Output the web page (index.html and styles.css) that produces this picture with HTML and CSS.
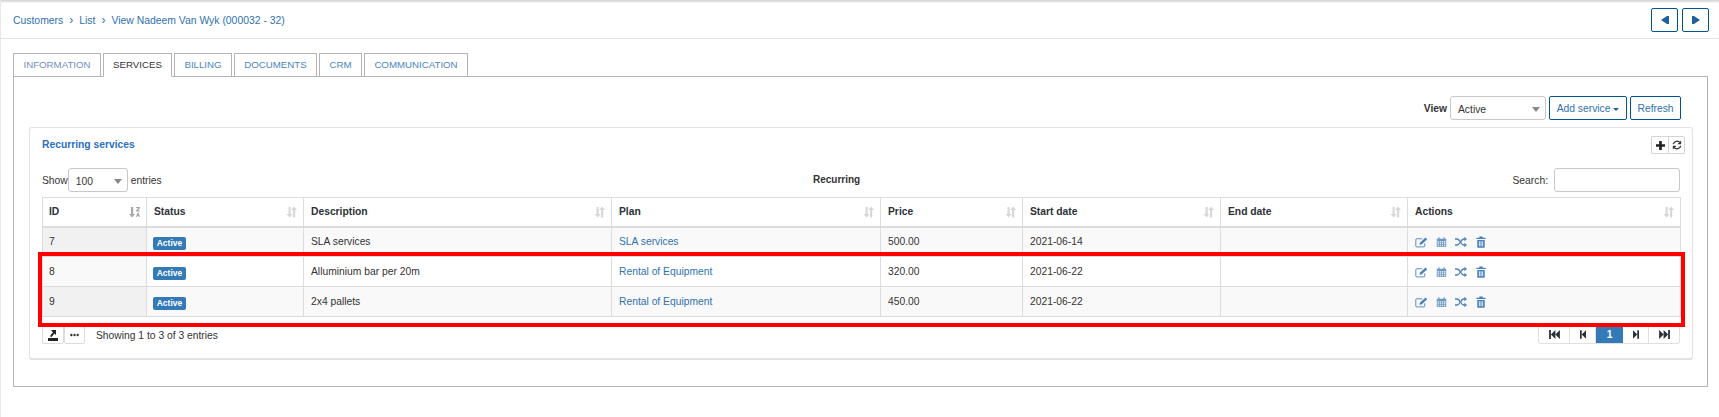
FILE: index.html
```html
<!DOCTYPE html>
<html lang="en">
<head>
<meta charset="utf-8">
<title>View Nadeem Van Wyk</title>
<link rel="stylesheet" href="styles.css">
</head>
<body>
<svg class="defs" aria-hidden="true">
  <symbol id="i-sort" viewBox="0 0 12 12"><path d="M2.500 1h2.200v7h2L3.600 11.500.5 8h2zM8 .5L11.200 4H9.200v7.500H7V4H5z"/></symbol>
  <symbol id="i-sortid" viewBox="0 0 12 12"><path d="M2 1h2.200v7h2l-3.100 3.500L0 8h2z"/><path d="M7 1h4v1l-2 2.500h2v1H7v-1l2-2.500H7zM7 11l1.500-4.500h1L11 11H9.900l-.3-1H8.400l-.3 1z"/></symbol>
  <symbol id="i-edit" viewBox="0 0 16 14"><path d="M12 8.500V12a1 1 0 0 1-1 1H2a1 1 0 0 1-1-1V4a1 1 0 0 1 1-1h7" fill="none" stroke="currentColor" stroke-width="1.100"/><path d="M6 8l7-6.500 2 2L8 10l-2.500.5z"/></symbol>
  <symbol id="i-cal" viewBox="0 0 14 14"><path d="M1 3h2V1h1.500v2h5V1H11v2h2v10.500H1zM2 6v1.500h2V6zm3 0v1.500h1.500V6zm2.500 0v1.500H9V6zM10 6v1.500h2V6zM2 8.500V10h2V8.500zm3 0V10h1.500V8.500zm2.500 0V10H9V8.500zm2.500 0V10h2V8.500zM2 11v1.500h2V11zm3 0v1.500h1.500V11zm2.500 0v1.500H9V11zm2.500 0v1.500h2V11z" fill-rule="evenodd"/></symbol>
  <symbol id="i-rand" viewBox="0 0 16 14"><path d="M0 3h3c3.500 0 5 8 8.500 8H13" fill="none" stroke="currentColor" stroke-width="1.800"/><path d="M0 11h3c3.500 0 5-8 8.500-8H13" fill="none" stroke="currentColor" stroke-width="1.800"/><path d="M12.500 0L16 3l-3.500 3zM12.500 8l3.500 3-3.500 3z"/></symbol>
  <symbol id="i-trash" viewBox="0 0 12 14"><path d="M4 2V.5h4V2h3.500v1.500H.5V2zM1.500 4.500h9V13a1 1 0 0 1-1 1h-7a1 1 0 0 1-1-1zM3.500 6v6h1V6zm2 0v6h1V6zm2 0v6h1V6z" fill-rule="evenodd"/></symbol>
  <symbol id="i-first" viewBox="0 0 12 10"><path d="M0 0h2v10H0zM7 0v10L2 5zM12 0v10L7 5z"/></symbol>
  <symbol id="i-prev" viewBox="0 0 7 10"><path d="M0 0h2v10H0zM7 0v10L2 5z"/></symbol>
  <symbol id="i-next" viewBox="0 0 7 10"><path d="M5 0h2v10H5zM0 0v10l5-5z"/></symbol>
  <symbol id="i-last" viewBox="0 0 12 10"><path d="M10 0h2v10h-2zM0 0v10l5-5zM5 0v10l5-5z"/></symbol>
  <symbol id="i-tprev" viewBox="0 0 8 8"><path d="M0 4l6-4v8zM6 0h2v8H6z"/></symbol>
  <symbol id="i-tnext" viewBox="0 0 8 8"><path d="M0 0h2v8H0zM2 0l6 4-6 4z"/></symbol>
  <symbol id="i-export" viewBox="0 0 10 11"><path d="M3 0h5v5L6.500 3.500 3.500 7H2.500V5L5 2.500zM0 8h10v3H0z"/></symbol>
  <symbol id="i-dots" viewBox="0 0 10 4"><circle cx="1.500" cy="2" r="1.300"/><circle cx="5" cy="2" r="1.300"/><circle cx="8.500" cy="2" r="1.300"/></symbol>
  <symbol id="i-plus" viewBox="0 0 10 10"><path d="M3.500 0h3v3.500H10v3H6.500V10h-3V6.500H0v-3h3.500z"/></symbol>
  <symbol id="i-refresh" viewBox="0 0 12 12"><path d="M1.500 5A4.600 4.600 0 0 1 9.600 3.200M10.500 7A4.600 4.600 0 0 1 2.400 8.800" fill="none" stroke="currentColor" stroke-width="1.600"/><path d="M11 .5V5H6.500zM1 11.500V7h4.500z"/></symbol>
</svg>

<header class="topbar">
  <nav class="crumbs">
    <a>Customers</a><span class="sep">›</span><a>List</a><span class="sep">›</span><a>View Nadeem Van Wyk (000032 - 32)</a>
  </nav>
  <div class="pager-top">
    <button class="btn-top"><svg class="ico-top"><use href="#i-tprev"/></svg></button>
    <button class="btn-top"><svg class="ico-top"><use href="#i-tnext"/></svg></button>
  </div>
</header>

<main class="content">
  <ul class="tabs">
    <li class="tab tab-info">INFORMATION</li>
    <li class="tab tab-services">SERVICES</li>
    <li class="tab tab-billing">BILLING</li>
    <li class="tab tab-docs">DOCUMENTS</li>
    <li class="tab tab-crm">CRM</li>
    <li class="tab tab-comm">COMMUNICATION</li>
  </ul>
  <section class="panel">
    <div class="toolbar">
      <b class="view-label">View</b>
      <div class="select select-view"><span>Active</span><i class="caret"></i></div>
      <button class="btn btn-add">Add service <i class="caret-sm"></i></button>
      <button class="btn btn-refresh">Refresh</button>
    </div>
    <div class="card">
      <div class="card-head">
        <h2 class="card-title">Recurring services</h2>
        <div class="tools">
          <button class="tool"><svg class="ico-plus"><use href="#i-plus"/></svg></button>
          <button class="tool"><svg class="ico-refresh"><use href="#i-refresh"/></svg></button>
        </div>
      </div>
      <div class="table-head">
        <div class="length">Show <div class="select select-len"><span>100</span><i class="caret"></i></div> entries</div>
        <div class="table-title">Recurring</div>
        <div class="search">Search: <input class="search-input" type="text"></div>
      </div>
      <div class="table-wrap">
        <table class="grid">
          <colgroup>
            <col class="c-id"><col class="c-status"><col class="c-desc"><col class="c-plan"><col class="c-price"><col class="c-start"><col class="c-end"><col class="c-act">
          </colgroup>
          <thead>
            <tr>
              <th class="th-id">ID<svg class="sort sort-on"><use href="#i-sortid"/></svg></th>
              <th>Status<svg class="sort"><use href="#i-sort"/></svg></th>
              <th>Description<svg class="sort"><use href="#i-sort"/></svg></th>
              <th>Plan<svg class="sort"><use href="#i-sort"/></svg></th>
              <th>Price<svg class="sort"><use href="#i-sort"/></svg></th>
              <th>Start date<svg class="sort"><use href="#i-sort"/></svg></th>
              <th>End date<svg class="sort"><use href="#i-sort"/></svg></th>
              <th>Actions<svg class="sort"><use href="#i-sort"/></svg></th>
            </tr>
          </thead>
          <tbody>
            <tr class="odd">
              <td class="id">7</td><td><span class="badge">Active</span></td><td>SLA services</td><td><a>SLA services</a></td><td>500.00</td><td>2021-06-14</td><td></td>
              <td class="actions"><svg class="a-edit"><use href="#i-edit"/></svg><svg class="a-cal"><use href="#i-cal"/></svg><svg class="a-rand"><use href="#i-rand"/></svg><svg class="a-trash"><use href="#i-trash"/></svg></td>
            </tr>
            <tr>
              <td class="id">8</td><td><span class="badge">Active</span></td><td>Alluminium bar per 20m</td><td><a>Rental of Equipment</a></td><td>320.00</td><td>2021-06-22</td><td></td>
              <td class="actions"><svg class="a-edit"><use href="#i-edit"/></svg><svg class="a-cal"><use href="#i-cal"/></svg><svg class="a-rand"><use href="#i-rand"/></svg><svg class="a-trash"><use href="#i-trash"/></svg></td>
            </tr>
            <tr class="odd">
              <td class="id">9</td><td><span class="badge">Active</span></td><td>2x4 pallets</td><td><a>Rental of Equipment</a></td><td>450.00</td><td>2021-06-22</td><td></td>
              <td class="actions"><svg class="a-edit"><use href="#i-edit"/></svg><svg class="a-cal"><use href="#i-cal"/></svg><svg class="a-rand"><use href="#i-rand"/></svg><svg class="a-trash"><use href="#i-trash"/></svg></td>
            </tr>
          </tbody>
        </table>
        <div class="highlight"></div>
      </div>
      <div class="table-foot">
        <div class="foot-left">
          <div class="foot-tools">
            <button class="ft"><svg class="ico-export"><use href="#i-export"/></svg></button>
            <button class="ft"><svg class="ico-dots"><use href="#i-dots"/></svg></button>
          </div>
          <span class="info">Showing 1 to 3 of 3 entries</span>
        </div>
        <div class="pages">
          <span class="pg pg-first"><svg class="ico-d"><use href="#i-first"/></svg></span>
          <span class="pg pg-prev"><svg class="ico-s"><use href="#i-prev"/></svg></span>
          <span class="pg pg-cur">1</span>
          <span class="pg pg-next"><svg class="ico-s"><use href="#i-next"/></svg></span>
          <span class="pg pg-last"><svg class="ico-d"><use href="#i-last"/></svg></span>
        </div>
      </div>
    </div>
  </section>
</main>
</body>
</html>
```
FILE: styles.css
```css
* { box-sizing: border-box; }
html, body { margin: 0; padding: 0; }
body {
  height: 417px;
  overflow: hidden;
  background: #fff;
  color: #333;
  font-family: "Liberation Sans", Arial, sans-serif;
  font-size: 10.3px;
  box-shadow: inset 1px 0 0 #e8e8e8, inset 0 3px 2px -1px #d8d8d8;
}
a { color: #2f72ad; text-decoration: none; }
.defs { display: none; }
button { font-family: inherit; padding: 0; background: #fff; cursor: pointer; }

.topbar {
  height: 39px;
  display: flex;
  justify-content: space-between;
  padding: 8px 10px 0 13px;
  border-bottom: 1px solid #e3e3e3;
}
.crumbs { height: 24px; line-height: 26px; color: #2f72ad; font-size: 10.4px; }
.sep { display: inline-block; width: 16px; text-align: center; font-size: 12px; line-height: 10px; }
.pager-top { display: flex; gap: 4px; }
.btn-top {
  width: 27px;
  height: 24px;
  border: 1px solid #00548f;
  border-radius: 2px;
  color: #1f5f9c;
  display: flex;
  align-items: center;
  justify-content: center;
}
.ico-top { width: 8px; height: 8px; fill: currentColor; }

.content { padding: 14px 11px 0 13px; }
.tabs { display: flex; gap: 2px; list-style: none; margin: 0; padding: 0; }
.tab {
  height: 24px;
  margin-bottom: -1px;
  border: 1px solid #b4b4b4;
  background: #fff;
  color: #4a86c0;
  font-size: 9.7px;
  line-height: 21px;
  text-align: center;
  position: relative;
}
.tab-info { width: 88px; color: #6f8fc0; }
.tab-services { width: 69px; color: #333; border-bottom-color: #fff; }
.tab-billing { width: 58px; }
.tab-docs { width: 83px; }
.tab-crm { width: 43px; }
.tab-comm { width: 104px; }

.panel {
  height: 311px;
  border: 1px solid #b4b4b4;
  padding: 19px 14px 0 15px;
}
.toolbar {
  height: 24px;
  display: flex;
  justify-content: flex-end;
  align-items: center;
  gap: 3px;
  padding-right: 12px;
}
.view-label { font-size: 10.3px; }
.select {
  height: 24px;
  border: 1px solid #c8c8c8;
  border-radius: 3px;
  display: flex;
  align-items: center;
  justify-content: space-between;
  padding: 2px 5px 0 7px;
  background: #fff;
}
.select-view { width: 96px; }
.select-len { width: 60px; margin-right: 3px; }
.caret { width: 0; height: 0; border: 4px solid transparent; border-top: 5px solid #888; border-bottom: 0; }
.caret-sm { display: inline-block; width: 0; height: 0; border: 3px solid transparent; border-top: 3px solid #1f5f9c; border-bottom: 0; vertical-align: 1px; }
.btn {
  height: 24px;
  border: 1px solid #00548f;
  border-radius: 2px;
  color: #2f72ad;
  font-size: 10.3px;
}
.btn-add { width: 78px; }
.btn-refresh { width: 51px; }

.card {
  height: 233px;
  margin-top: 7px;
  border: 1px solid #e2e2e2;
  border-bottom-width: 2px;
  border-radius: 3px;
  padding: 0 12px;
}
.card-head { height: 40px; display: flex; justify-content: space-between; padding-top: 8px; }
.card-title { margin: 3px 0 0; font-size: 10.3px; font-weight: bold; color: #2a6fc0; line-height: 11px; }
.tools { display: flex; margin-right: -5px; height: 18px; }
.tool {
  width: 17px;
  height: 18px;
  border: 1px solid #d4d4d4;
  border-right-width: 0;
  color: #222;
  display: flex;
  align-items: center;
  justify-content: center;
  border-radius: 2px 0 0 2px;
}
.tool + .tool { border-right-width: 1px; border-radius: 0 2px 2px 0; }
.ico-plus { width: 9px; height: 9px; fill: #222; }
.ico-refresh { width: 10px; height: 10px; fill: #333; color: #333; }

.table-head {
  height: 29px;
  display: grid;
  grid-template-columns: 771px auto 1fr;
  align-items: start;
}
.length { display: flex; align-items: center; height: 24px; }
.table-title { font-weight: bold; line-height: 24px; font-size: 10px; }
.search { display: flex; justify-content: flex-end; align-items: center; gap: 6px; height: 24px; }
.search-input { width: 126px; height: 24px; border: 1px solid #c8c8c8; border-radius: 3px; background: #fff; }

.table-wrap { position: relative; }
.grid { width: 1638px; table-layout: fixed; border-collapse: collapse; }
.c-id { width: 104px; }
.c-status { width: 157px; }
.c-desc { width: 308px; }
.c-plan { width: 269px; }
.c-price { width: 142px; }
.c-start { width: 198px; }
.c-end { width: 187px; }
.c-act { width: 273px; }
.grid th, .grid td { border: 1px solid #dcdcdc; padding: 0 7px; text-align: left; }
.grid th {
  height: 29px;
  position: relative;
  border-bottom-width: 2px;
  font-size: 10.3px;
  font-weight: bold;
  color: #2c3138;
}
.grid th.th-id, .grid td.id { padding-left: 6px; }
.grid td { height: 30px; }
.grid tbody tr.odd td { background: #f9f9f9; }
.grid tbody tr td.id { background: #f9f9f9; }
.grid tbody tr.odd td.id { background: #f1f1f1; }
.sort { position: absolute; right: 5px; top: 8px; width: 12px; height: 12px; fill: #d8d8d8; }
.sort-on { fill: #a8a8a8; }
.badge {
  display: inline-block;
  position: relative;
  top: 2px;
  left: -1px;
  width: 33px;
  height: 13px;
  background: #337ab7;
  border-radius: 2px;
  color: #fff;
  font-size: 8.5px;
  font-weight: bold;
  line-height: 13px;
  text-align: center;
}
.actions { color: #4a80b8; fill: #4a80b8; }
.actions svg { vertical-align: middle; height: 12px; }
.a-edit { width: 13px; }
.a-cal { width: 11px; margin-left: 8px; opacity: .8; }
.a-rand { width: 12px; margin-left: 8px; }
.a-trash { width: 10px; margin-left: 9px; }

.highlight {
  position: absolute;
  left: -4px;
  top: 55px;
  width: 1647px;
  height: 75px;
  border: 4px solid #f00;
  pointer-events: none;
}

.table-foot { display: flex; justify-content: space-between; margin-top: 9px; }
.foot-left { display: flex; align-items: center; gap: 11px; height: 18px; }
.foot-tools { display: flex; }
.ft {
  width: 22px;
  height: 18px;
  border: 1px solid #dcdcdc;
  border-radius: 0 0 2px 2px;
  display: flex;
  align-items: center;
  justify-content: center;
}
.ft + .ft { width: 21px; }
.ico-export { width: 10px; height: 11px; fill: #222; }
.ico-dots { width: 9px; height: 4px; fill: #333; }
.pages {
  display: flex;
  height: 18px;
  border: 1px solid #e0e0e0;
  border-top: 0;
  border-radius: 0 0 3px 3px;
}
.pg { display: flex; align-items: center; justify-content: center; border-right: 1px solid #e0e0e0; color: #333; fill: #2c3138; }
.pg-first { width: 31px; }
.pg-prev { width: 26px; }
.pg-cur { width: 27px; background: #337ab7; color: #fff; font-weight: bold; border-right: 0; }
.pg-next { width: 26px; }
.pg-last { width: 30px; border-right: 0; }
.ico-d { width: 11px; height: 9px; }
.ico-s { width: 6px; height: 9px; }
```
